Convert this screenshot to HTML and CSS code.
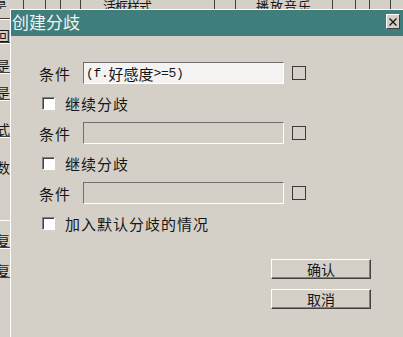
FILE: index.html
```html
<!DOCTYPE html>
<html lang="zh-CN">
<head>
    <meta charset="UTF-8">
    <title>创建分歧</title>
<link rel="stylesheet" href="styles.css">
</head>
<body>
    <!-- editor behind the dialog -->
    <div class="desk">
        <div class="top-strip">
            <div class="cell c1"><span>是</span></div>
            <div class="cell c2"></div>
            <div class="cell c3"></div>
            <div class="cell c4"></div>
            <div class="cell c5"><span>活框样式</span></div>
            <div class="cell c6"></div>
            <div class="cell c7"><span>播放音乐</span></div>
            <div class="cell c8"></div>
            <div class="cell c9"></div>
            <div class="cell c10"></div>
        </div>
        <div class="side">
            <div class="side-btn s1"></div>
            <div class="side-btn s2"><span>回</span></div>
            <div class="side-btn s3"><span>是</span></div>
            <div class="side-btn s4"><span>是</span></div>
            <div class="side-btn s5"><span>式</span></div>
            <div class="side-btn s6"><span>数</span></div>
            <div class="side-btn s7"><span>复</span></div>
            <div class="side-btn s8"><span>复</span></div>
        </div>
    </div>

    <div class="dialog">
        <div class="title-bar">
            <span class="title">创建分歧</span>
            <button class="close-btn">
                <svg width="8" height="8" viewBox="0 0 8 8">
                    <path d="M0.5 0.5 L7.5 7.5 M7.5 0.5 L0.5 7.5" stroke="#1a1a1a" stroke-width="1.4" fill="none"/>
                </svg>
            </button>
        </div>
        <div class="dialog-body">
            <div class="form-row">
                <span class="label">条件</span>
                <div class="field"><span class="asc">(f.</span>好感度<span class="asc">&gt;=5)</span></div>
                <span class="mark"></span>
            </div>
            <div class="form-row">
                <span class="check"></span>
                <span class="check-text">继续分歧</span>
            </div>
            <div class="form-row">
                <span class="label">条件</span>
                <div class="field disabled"></div>
                <span class="mark"></span>
            </div>
            <div class="form-row">
                <span class="check"></span>
                <span class="check-text">继续分歧</span>
            </div>
            <div class="form-row">
                <span class="label">条件</span>
                <div class="field disabled"></div>
                <span class="mark"></span>
            </div>
            <div class="form-row">
                <span class="check"></span>
                <span class="check-text">加入默认分歧的情况</span>
            </div>

            <div class="buttons">
                <button class="btn">确认</button>
                <button class="btn">取消</button>
            </div>
        </div>
    </div>
</body>
</html>
```

FILE: styles.css
```css
body {
    margin: 0;
    width: 403px;
    height: 337px;
    overflow: hidden;
    position: relative;
    background-color: #d4d0c8;
    font-family: "Noto Sans CJK SC", sans-serif;
    color: #161616;
}

/* background editor */
.desk {
    height: 337px;
}
.top-strip {
    display: flex;
    height: 9px;
    overflow: hidden;
}
.top-strip .cell {
    display: flex;
    align-items: flex-end;
    justify-content: center;
    border-right: 1px solid #404040;
    font-size: 13px;
    line-height: 13px;
    overflow: hidden;
}
.top-strip .cell span {
    margin-bottom: -3px;
    white-space: nowrap;
}
.top-strip .c1 { width: 23px; justify-content: flex-start; }
.top-strip .c1 span { margin-left: -6px; }
.top-strip .c2 { width: 21px; }
.top-strip .c3 { width: 14px; }
.top-strip .c4 { width: 19px; }
.top-strip .c5 { width: 133px; justify-content: flex-start; }
.top-strip .c5 span { margin-left: 22px; letter-spacing: -1px; }
.top-strip .c6 { width: 20px; }
.top-strip .c7 { width: 96px; }
.top-strip .c7 span { letter-spacing: 1px; }
.top-strip .c8 { width: 22px; }
.top-strip .c9 { width: 13px; }
.top-strip .c10 { width: 20px; }

.side {
    display: flex;
    flex-direction: column;
    width: 10px;
}
.side-btn {
    display: flex;
    align-items: flex-end;
    justify-content: flex-end;
    overflow: hidden;
    border-top: 1px solid #fff;
    border-bottom: 1px solid #404040;
    font-size: 14px;
    line-height: 14px;
}
.side .s1 { height: 9px; border-top: none; }
.side .s2 { height: 22px; }
.side .s3 { height: 28px; }
.side .s4 { height: 25px; }
.side .s5 { height: 35px; }
.side .s6 { height: 82px; border-bottom: none; align-items: flex-start; }
.side .s6 span { margin-top: 22px; }
.side .s7 { height: 26px; }
.side .s8 { height: 28px; }

/* dialog window */
.dialog {
    position: absolute;
    left: 10px;
    top: 9px;
    right: 0;
    bottom: 0;
    display: flex;
    flex-direction: column;
    background-color: #d4d0c8;
    border-left: 1px solid #fff;
    border-top: 1px solid #fff;
}
.title-bar {
    display: flex;
    justify-content: space-between;
    align-items: flex-start;
    height: 26px;
    background-color: #3f7e7b;
}
.title {
    color: #eef4f3;
    font-size: 17px;
    line-height: 24px;
    margin-left: 1px;
}
.close-btn {
    display: flex;
    align-items: center;
    justify-content: center;
    width: 14px;
    height: 15px;
    margin: 4px 3px 0 0;
    padding: 0;
    background-color: #d4d0c8;
    border: 1px solid;
    border-color: #fff #404040 #404040 #fff;
}

.dialog-body {
    display: flex;
    flex-direction: column;
    padding: 22px 0 0 28px;
}
.form-row {
    display: flex;
    align-items: center;
    height: 30px;
}
.label {
    width: 44px;
    font-size: 15px;
    letter-spacing: 1px;
}
.field {
    display: flex;
    align-items: center;
    box-sizing: border-box;
    width: 201px;
    height: 22px;
    padding-left: 2px;
    background-color: #f4f3f1;
    border: 1px solid;
    border-color: #6f6f6f #fff #fff #6f6f6f;
    font-size: 15px;
    white-space: nowrap;
}
.field .asc {
    font-family: "Liberation Mono", monospace;
    font-size: 13px;
    letter-spacing: -0.3px;
}
.field.disabled {
    background-color: #d4d0c8;
}
.mark {
    box-sizing: border-box;
    width: 14px;
    height: 14px;
    margin-left: 8px;
    border: 1px solid #3a3a3a;
}
.check {
    box-sizing: border-box;
    width: 13px;
    height: 13px;
    margin-left: 3px;
    background-color: #fff;
    border: 1px solid;
    border-color: #808080 #fff #fff #808080;
    box-shadow: inset 1px 1px #404040;
}
.check-text {
    margin-left: 10px;
    font-size: 15px;
    letter-spacing: 1px;
}

.buttons {
    display: flex;
    flex-direction: column;
    gap: 10px;
    margin: 21px 0 0 232px;
}
.btn {
    box-sizing: border-box;
    width: 100px;
    height: 20px;
    padding: 0;
    background-color: #d4d0c8;
    border: 1px solid;
    border-color: #fff #404040 #404040 #fff;
    box-shadow: inset -1px -1px #808080;
    font-family: "Noto Sans CJK SC", sans-serif;
    font-size: 14px;
    line-height: 16px;
    color: #161616;
}
```
